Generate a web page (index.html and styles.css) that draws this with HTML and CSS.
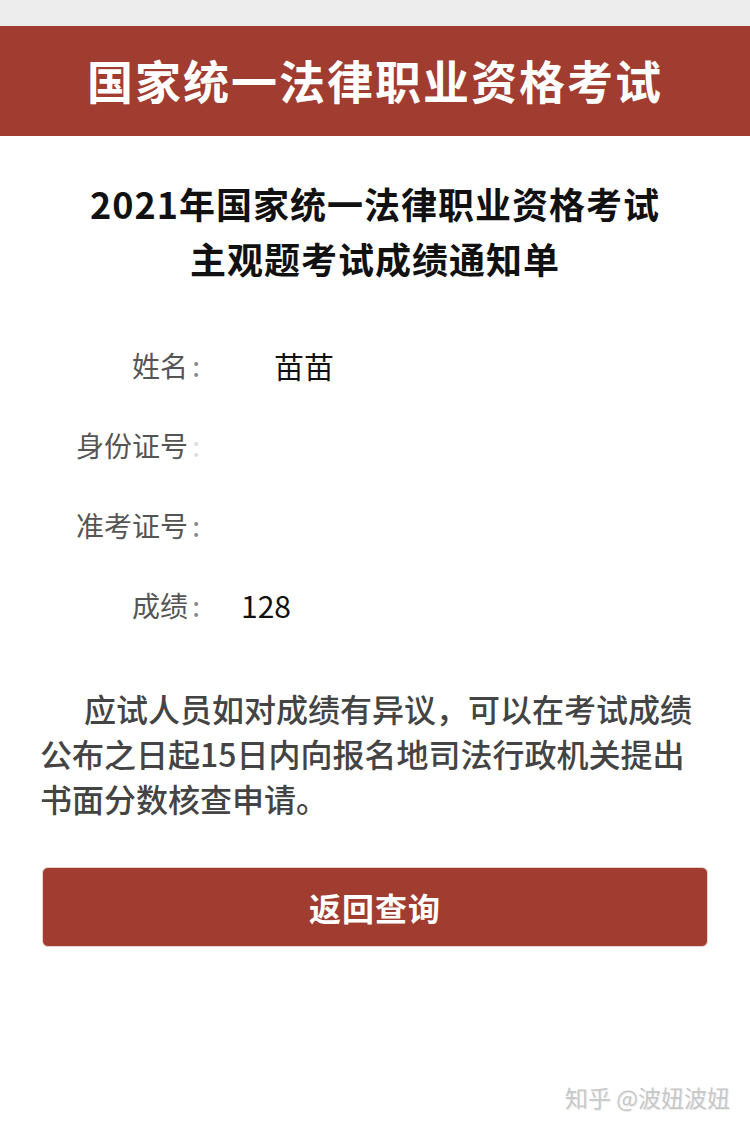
FILE: index.html
```html
<!DOCTYPE html>
<html lang="zh-CN">
<head>
    <meta charset="UTF-8">
    <meta name="viewport" content="width=device-width, initial-scale=1.0">
    <title>成绩通知单</title>
    <link rel="stylesheet" href="styles.css">
</head>
<body>
    <div class="statusbar"></div>

    <header class="banner">
        <h1>国家统一法律职业资格考试</h1>
    </header>

    <main class="notice">
        <h2 class="notice-title">2021年国家统一法律职业资格考试<br>主观题考试成绩通知单</h2>

        <dl class="info">
            <div class="info-row">
                <dt>姓名<span class="colon">:</span></dt>
                <dd class="name-val">苗苗</dd>
            </div>
            <div class="info-row">
                <dt>身份证号<span class="colon faint">:</span></dt>
                <dd></dd>
            </div>
            <div class="info-row">
                <dt>准考证号<span class="colon">:</span></dt>
                <dd></dd>
            </div>
            <div class="info-row">
                <dt>成绩<span class="colon">:</span></dt>
                <dd>128</dd>
            </div>
        </dl>

        <p class="tip">应试人员如对成绩有异议，可以在考试成绩公布之日起15日内向报名地司法行政机关提出书面分数核查申请。</p>

        <a class="back-btn" href="#">返回查询</a>
    </main>

    <div class="credit">知乎 @波妞波妞</div>
</body>
</html>
```

FILE: styles.css
```css
body {
    font-family: "Noto Sans CJK SC", "Noto Sans", sans-serif;
    margin: 0;
    padding: 0;
    background: #fff;
    color: #111;
}
.statusbar {
    height: 26px;
    background: #ededed;
}
.banner {
    background: #a13c30;
    height: 110px;
    box-sizing: border-box;
    padding-bottom: 5px;
    display: flex;
    align-items: center;
    justify-content: center;
}
.banner h1 {
    margin: 0;
    color: #fff;
    font-size: 46px;
    font-weight: bold;
    letter-spacing: 2px;
    line-height: 1;
}
.notice {
    padding: 0 40px;
}
.notice-title {
    margin: 40px 0 39px;
    text-align: center;
    font-size: 36px;
    font-weight: bold;
    line-height: 55px;
    letter-spacing: 1px;
    color: #111;
}
.info {
    margin: 0;
}
.info-row {
    display: flex;
    align-items: center;
    height: 80px;
}
.info-row dt {
    width: 160px;
    text-align: right;
    font-size: 28px;
    color: #555;
}
.colon {
    display: inline-block;
    width: 12px;
    text-align: right;
    color: #888;
}
.colon.faint {
    color: #ddd;
}
.info-row dd {
    margin: 0 0 0 41px;
    font-size: 30px;
    color: #111;
}
.info-row .name-val {
    padding-left: 33px;
}
.tip {
    margin: 41px 0 46px;
    font-size: 32px;
    line-height: 45px;
    text-indent: 44px;
    color: #444;
    font-weight: 500;
}
.back-btn {
    display: flex;
    align-items: center;
    justify-content: center;
    height: 78px;
    margin: 0 2px;
    background: #a13c30;
    border: 1px solid #ead0cc;
    border-radius: 6px;
    color: #fff;
    font-size: 32px;
    font-weight: bold;
    letter-spacing: 1px;
    text-decoration: none;
}
.credit {
    margin: 133px 20px 0 0;
    text-align: right;
    font-size: 23px;
    color: #c8c8c8;
    text-shadow: 1px 1px 0 #eee;
}
```
